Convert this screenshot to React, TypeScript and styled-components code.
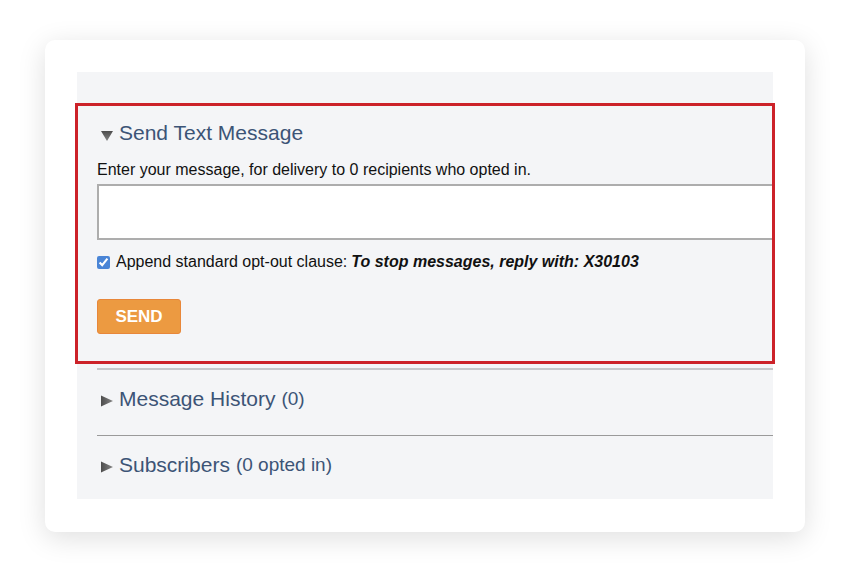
import React from 'react';
import styled, { createGlobalStyle } from 'styled-components';

const GlobalStyle = createGlobalStyle`
  html, body {
    margin: 0;
    padding: 0;
    background: #ffffff;
    font-family: "Liberation Sans", Arial, Helvetica, sans-serif;
  }
`;

const Page = styled.div`
  width: 851px;
  height: 577px;
  padding: 40px 0 0 45px;
  box-sizing: border-box;
`;

const Card = styled.div`
  width: 760px;
  height: 492px;
  box-sizing: border-box;
  padding: 32px 32px 33px 32px;
  background: #ffffff;
  border-radius: 10px;
  box-shadow: 0 6px 28px rgba(0, 0, 0, 0.13);
`;

const Panel = styled.div`
  height: 100%;
  box-sizing: border-box;
  padding-top: 31px;
  background: #f4f5f7;
`;

const Highlight = styled.section`
  margin: 0 -2px;
  border: 3px solid #cc2229;
  padding: 15px 0 27px 19px;
  overflow: hidden;
`;

const TitleRow = styled.div`
  display: flex;
  align-items: center;
  height: 24px;
  color: #3c5476;
  font-size: 21px;
  line-height: 24px;
`;

const Arrow = styled.svg<{ $open?: boolean }>`
  width: 12px;
  height: 12px;
  margin: ${p => (p.$open ? '5px 6px 0 4px' : '3px 6px 0 4px')};
  flex-shrink: 0;
`;

const Count = styled.span`
  font-size: 19px;
  margin-left: 6px;
`;

const Hint = styled.p`
  margin: 16px 0 0;
  font-size: 16px;
  line-height: 18px;
  color: #111;
`;

const MessageBox = styled.textarea`
  display: block;
  margin-top: 5px;
  width: calc(100% + 10px);
  height: 56px;
  box-sizing: border-box;
  border: 2px solid #adadad;
  background: #ffffff;
  resize: none;
  outline: none;
`;

const OptRow = styled.label`
  display: flex;
  align-items: center;
  margin-top: 13px;
  height: 18px;
  font-size: 16px;
  color: #111;
`;

const Check = styled.input`
  width: 13px;
  height: 13px;
  margin: 0 6px 0 0;
  accent-color: #4a85d6;
`;

const Clause = styled.b`
  font-style: italic;
  margin-left: 4px;
`;

const SendButton = styled.button`
  display: block;
  margin-top: 28px;
  width: 84px;
  height: 35px;
  border: 1px solid #e8873a;
  border-radius: 3px;
  background: #ec9a41;
  color: #ffffff;
  font-family: "Liberation Sans", Arial, sans-serif;
  font-weight: bold;
  font-size: 17px;
  padding: 0;
`;

const Collapsed = styled.section<{ $line: string; $bottom: number }>`
  margin-left: 20px;
  border-top: ${p => p.$line};
  padding: 17px 0 ${p => p.$bottom}px 0;
`;

const DownArrow = () => (
  <Arrow $open viewBox="0 0 12 12">
    <defs>
      <linearGradient id="ga" x1="0" y1="0" x2="0" y2="1">
        <stop offset="0" stopColor="#4d4d4d" />
        <stop offset="1" stopColor="#858585" />
      </linearGradient>
    </defs>
    <polygon points="0,1 12,1 6,11" fill="url(#ga)" />
  </Arrow>
);

const RightArrow = () => (
  <Arrow viewBox="0 0 12 12">
    <defs>
      <linearGradient id="gb" x1="0" y1="0" x2="1" y2="0">
        <stop offset="0" stopColor="#4d4d4d" />
        <stop offset="1" stopColor="#858585" />
      </linearGradient>
    </defs>
    <polygon points="0,0.5 12,6 0,11.5" fill="url(#gb)" />
  </Arrow>
);

export default function App() {
  return (
    <Page>
      <GlobalStyle />
      <Card>
        <Panel>
          <Highlight>
            <TitleRow>
              <DownArrow />
              Send Text Message
            </TitleRow>
            <Hint>Enter your message, for delivery to 0 recipients who opted in.</Hint>
            <MessageBox />
            <OptRow>
              <Check type="checkbox" defaultChecked />
              Append standard opt-out clause:
              <Clause>To stop messages, reply with: X30103</Clause>
            </OptRow>
            <SendButton>SEND</SendButton>
          </Highlight>
          <Collapsed $line="2px solid #c6c7c9" $bottom={24} style={{ marginTop: 4 }}>
            <TitleRow>
              <RightArrow />
              Message History<Count>(0)</Count>
            </TitleRow>
          </Collapsed>
          <Collapsed $line="1px solid #9a9a9a" $bottom={22}>
            <TitleRow>
              <RightArrow />
              Subscribers<Count>(0 opted in)</Count>
            </TitleRow>
          </Collapsed>
        </Panel>
      </Card>
    </Page>
  );
}
